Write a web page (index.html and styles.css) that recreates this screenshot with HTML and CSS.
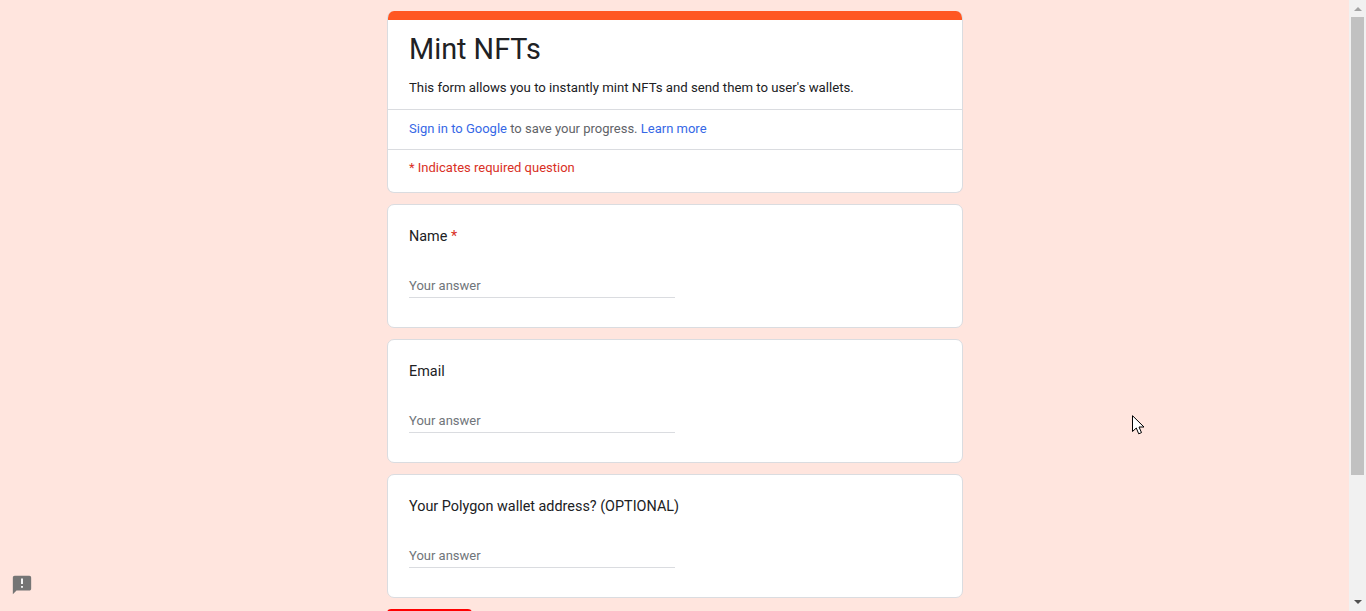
FILE: index.html
```html
<!DOCTYPE html>
<html lang="en">
<head>
    <meta charset="UTF-8">
    <title>Mint NFTs</title>
    <link rel="stylesheet" href="styles.css">
</head>
<body>
    <div class="page">
        <main class="form">
            <section class="card header-card">
                <div class="band"></div>
                <div class="intro">
                    <h1>Mint NFTs</h1>
                    <p>This form allows you to instantly mint NFTs and send them to user's wallets.</p>
                </div>
                <div class="signin"><a href="#">Sign in to Google</a> to save your progress. <a href="#">Learn more</a></div>
                <div class="required-note">* Indicates required question</div>
            </section>

            <section class="card question">
                <div class="label">Name <span class="star">*</span></div>
                <div class="answer">Your answer</div>
            </section>

            <section class="card question">
                <div class="label">Email</div>
                <div class="answer">Your answer</div>
            </section>

            <section class="card question">
                <div class="label">Your Polygon wallet address? (OPTIONAL)</div>
                <div class="answer">Your answer</div>
            </section>

            <div class="submit"></div>
        </main>

        <div class="scrollbar">
            <div class="arrow arrow-up"></div>
            <div class="track"><div class="thumb"></div></div>
            <div class="arrow arrow-down"></div>
        </div>
    </div>

    <svg class="report" width="22" height="22" viewBox="0 0 24 24">
        <path fill="#757575" d="M20 2H4c-1.1 0-2 .9-2 2v18l4-4h14c1.1 0 2-.9 2-2V4c0-1.100-.9-2-2-2z"/>
        <path fill="#fff" d="M11 5h2v6h-2zM11 13h2v2h-2z"/>
    </svg>

    <svg class="pointer" width="13" height="20" viewBox="0 0 13 20">
        <path fill="#fff" stroke="#000" stroke-width="1" d="M.5.700v15.800l3.800-3.500 2.400 5.800 2.800-1.200-2.500-5.600h5z"/>
    </svg>
</body>
</html>
```

FILE: styles.css
```css
html, body {
    margin: 0;
    height: 100%;
    overflow: hidden;
}
body {
    font-family: Roboto, sans-serif;
    background: #ffe5de;
    color: #202124;
}
.page {
    display: flex;
    height: 611px;
}
.form {
    flex: 1;
    display: flex;
    flex-direction: column;
    align-items: flex-start;
    padding: 11px 0 0 387px;
    gap: 11px;
    overflow: hidden;
}
.card {
    box-sizing: border-box;
    flex: none;
    width: 576px;
    background: #fff;
    border: 1px solid #dadce0;
    border-radius: 7px;
}
.header-card {
    height: 182px;
    border-top: none;
    overflow: hidden;
}
.band {
    height: 9px;
    margin: 0 -1px;
    background: #ff5722;
}
.intro {
    height: 89px;
    padding: 0 21px;
    border-bottom: 1px solid #dadce0;
}
h1 {
    margin: 0;
    padding-top: 11px;
    font-size: 28.8px;
    font-weight: 400;
    line-height: 36px;
}
p {
    margin: 0;
    padding-top: 11px;
    font-size: 13.2px;
    line-height: 20px;
}
.signin {
    height: 39px;
    padding: 0 21px;
    border-bottom: 1px solid #dadce0;
    font-size: 13px;
    line-height: 38px;
    color: #5f6368;
}
.signin a {
    color: #3668e6;
    text-decoration: none;
}
.required-note {
    padding: 0 21px;
    font-size: 13px;
    line-height: 36px;
    color: #d93025;
}
.question {
    height: 124px;
    padding: 22px 21px 0;
}
.label {
    font-size: 14.4px;
    line-height: 20px;
}
.star {
    color: #d93025;
}
.answer {
    box-sizing: border-box;
    width: 266px;
    height: 33px;
    margin-top: 18px;
    border-bottom: 1px solid #dadce0;
    font-size: 13px;
    line-height: 42px;
    color: #70757a;
}
.submit {
    flex: none;
    width: 85px;
    height: 33px;
    border-radius: 4px;
    background: #f00;
}
.scrollbar {
    flex: none;
    width: 17px;
    display: flex;
    flex-direction: column;
    background: #f1f1f1;
}
.track {
    flex: 1;
    padding: 0 2px;
}
.thumb {
    height: 458px;
    background: #c1c1c1;
}
.arrow {
    position: relative;
    flex: none;
    height: 17px;
}
.arrow::after {
    content: "";
    position: absolute;
    left: 5px;
    border-left: 4px solid transparent;
    border-right: 4px solid transparent;
}
.arrow-up::after {
    top: 7px;
    border-bottom: 4px solid #a3a3a3;
}
.arrow-down::after {
    top: 6px;
    border-top: 4px solid #505050;
}
.report {
    position: absolute;
    left: 11px;
    top: 574px;
}
.pointer {
    position: absolute;
    left: 1132px;
    top: 415px;
}
```
